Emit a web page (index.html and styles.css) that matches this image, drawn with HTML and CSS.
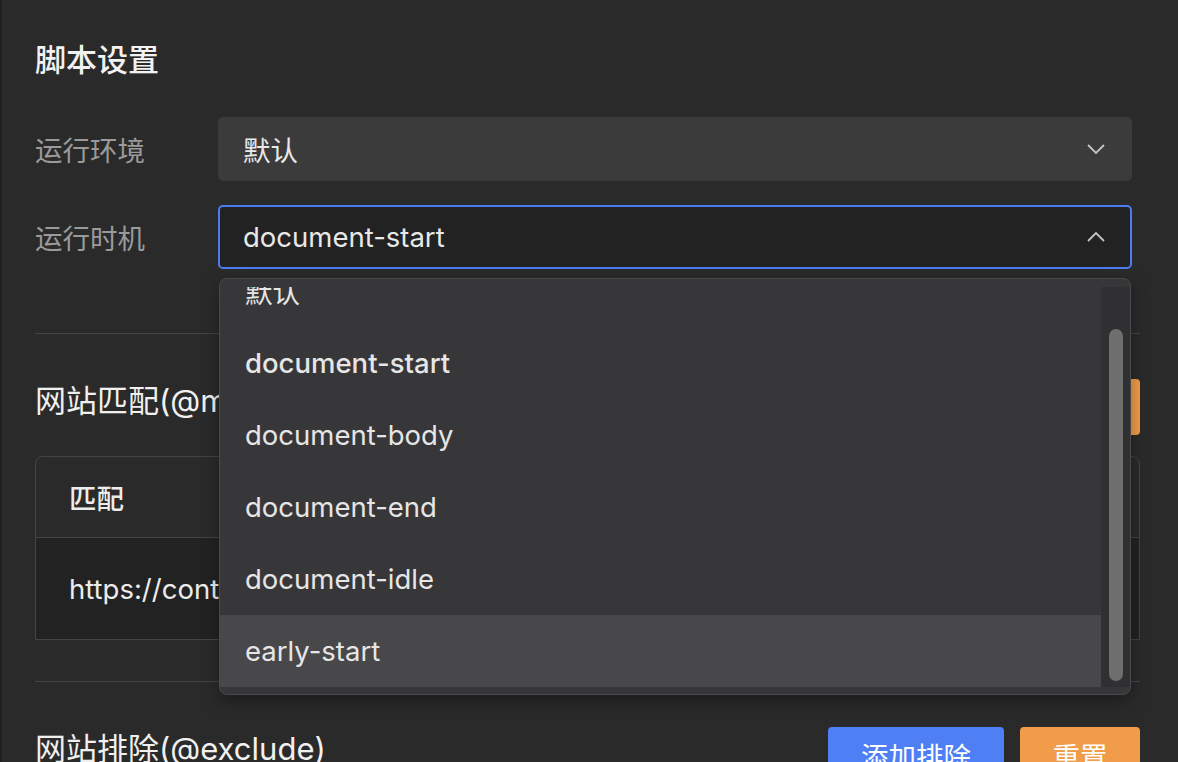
FILE: index.html
```html
<!DOCTYPE html>
<html lang="zh-CN">
<head>
    <meta charset="UTF-8">
    <meta name="viewport" content="width=device-width, initial-scale=1.0">
    <title>脚本设置</title>
    <link rel="stylesheet" href="styles.css">
</head>
<body>

    <div class="panel">
        <h2 class="title">脚本设置</h2>

        <div class="form-row">
            <label>运行环境</label>
            <div class="select">
                <span>默认</span>
                <svg class="chevron" viewBox="0 0 18 10"><polyline points="1,1 9,9 17,1"/></svg>
            </div>
        </div>

        <div class="form-row">
            <label>运行时机</label>
            <div class="select-wrap">
                <div class="select open">
                    <span>document-start</span>
                    <svg class="chevron" viewBox="0 0 18 10"><polyline points="1,9 9,1 17,9"/></svg>
                </div>

                <!-- open option list -->
                <div class="dropdown">
                    <div class="dropdown-view">
                        <ul class="options">
                            <li>默认</li>
                            <li class="selected">document-start</li>
                            <li>document-body</li>
                            <li>document-end</li>
                            <li>document-idle</li>
                            <li class="hover">early-start</li>
                        </ul>
                        <div class="scrollbar"><div class="thumb"></div></div>
                    </div>
                </div>
            </div>
        </div>

        <hr class="divider">

        <div class="section-head">
            <h3>网站匹配(@match)</h3>
            <div class="actions">
                <button class="btn btn-blue">添加匹配</button>
                <button class="btn btn-orange">重置</button>
            </div>
        </div>

        <div class="table">
            <div class="table-head">匹配</div>
            <div class="table-row">https://contents.example.com/*</div>
        </div>

        <hr class="divider">

        <div class="section-head">
            <h3>网站排除(@exclude)</h3>
            <div class="actions">
                <button class="btn btn-blue">添加排除</button>
                <button class="btn btn-orange">重置</button>
            </div>
        </div>
    </div>

</body>
</html>
```

FILE: styles.css
```css
* {
    margin: 0;
    padding: 0;
    box-sizing: border-box;
    font-family: Inter, "Noto Sans CJK SC", sans-serif;
}
body {
    background: #2a2a2a;
    color: #ececec;
    height: 762px;
    overflow: hidden;
}
.panel {
    border-left: 2px solid #202020;
    min-height: 100%;
    padding: 39px 38px 0 33px;
}
.title {
    font-size: 31px;
    font-weight: 500;
    line-height: 42px;
    color: #f2f2f2;
}

/* form rows */
.form-row {
    display: flex;
    align-items: center;
    padding-right: 8px;
    margin-top: 24px;
}
.title + .form-row {
    margin-top: 36px;
}
.form-row label {
    width: 183px;
    flex-shrink: 0;
    font-size: 27.5px;
    color: #9a9a9a;
}
.select-wrap {
    flex: 1;
    position: relative;
}
.select {
    flex: 1;
    height: 64px;
    display: flex;
    align-items: center;
    justify-content: space-between;
    padding: 0 27px 0 25px;
    background: #3b3b3b;
    border-radius: 5px;
    font-size: 27.5px;
    color: #e8e8e8;
}
.select.open {
    background: #222;
    border: 2px solid #4c7cf0;
    padding: 0 25px 0 23px;
}
.chevron {
    width: 18px;
    height: 10px;
    fill: none;
    stroke: #c4c4c4;
    stroke-width: 1.8;
}

/* dropdown */
.dropdown {
    position: absolute;
    top: calc(100% + 9px);
    left: 1px;
    right: 1px;
    background: #373739;
    border: 1px solid #4a4a4c;
    border-radius: 8px;
    padding: 8px 0 7px;
    box-shadow: 0 6px 16px rgba(0,0,0,0.35);
    z-index: 10;
}
.dropdown-view {
    height: 400px;
    overflow: hidden;
    display: flex;
}
.options {
    flex: 1;
    list-style: none;
    margin-top: -32px;
}
.options li {
    height: 72px;
    display: flex;
    align-items: center;
    padding-left: 25px;
    font-size: 27.5px;
    color: #e6e6e6;
}
.options li.selected {
    font-weight: 500;
}
.options li.hover {
    background: #48484a;
}
.scrollbar {
    width: 29px;
    background: #303032;
    padding: 42px 0 6px 8px;
}
.thumb {
    width: 14px;
    height: 100%;
    background: #6e6e6e;
    border-radius: 7px;
}

.divider {
    border: none;
    border-top: 1px solid #444;
    margin-top: 64px;
}

/* sections */
.section-head {
    display: flex;
    justify-content: space-between;
    align-items: flex-start;
    margin-top: 45px;
}
.section-head h3 {
    font-size: 31px;
    font-weight: 400;
    line-height: 44px;
    color: #f0f0f0;
}
.actions {
    display: flex;
    gap: 16px;
}
.btn {
    height: 56px;
    border: none;
    border-radius: 4px;
    font-size: 27.5px;
    color: white;
    cursor: pointer;
}
.btn-blue {
    width: 176px;
    background: #4f7ff5;
}
.btn-orange {
    width: 120px;
    background: #f09c48;
}

/* match table */
.table {
    margin-top: 21px;
    border: 1px solid #444;
    border-radius: 8px 8px 0 0;
    overflow: hidden;
}
.table-head {
    height: 81px;
    display: flex;
    align-items: center;
    padding-left: 33px;
    font-size: 27.5px;
    font-weight: 500;
    border-bottom: 1px solid #444;
}
.table-row {
    height: 101px;
    display: flex;
    align-items: center;
    padding-left: 33px;
    background: #222;
    font-size: 27.5px;
    color: #ececec;
}
.table + .divider {
    margin-top: 41px;
}
```
